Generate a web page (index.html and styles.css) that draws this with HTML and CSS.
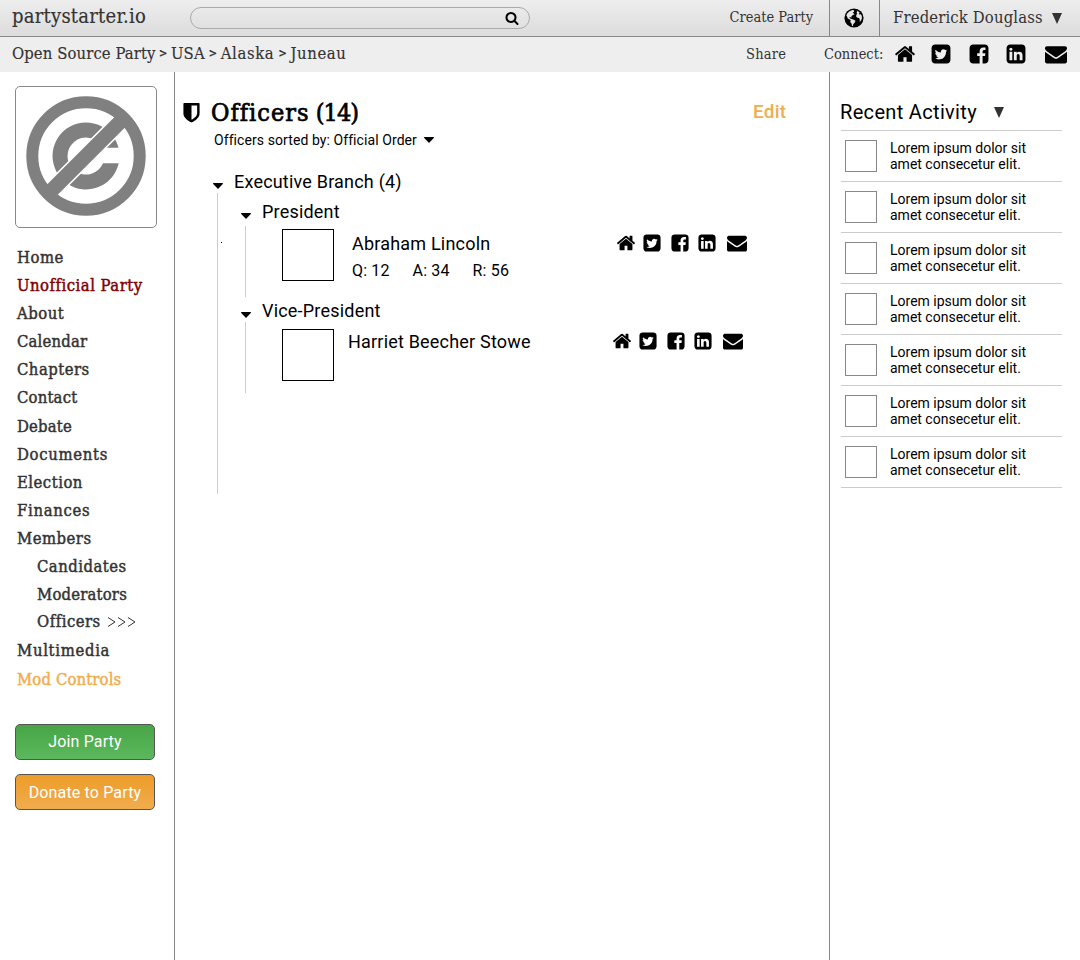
FILE: index.html
```html
<!DOCTYPE html>
<html lang="en">
<head>
<meta charset="utf-8">
<title>Officers - Open Source Party - partystarter.io</title>
<link rel="stylesheet" href="styles.css">
</head>
<body>
<svg class="sprite" aria-hidden="true">
  <symbol id="i-home" viewBox="0 0 1792 1792"><path d="M1472 992v480q0 26-19 45t-45 19h-384v-384h-256v384h-384q-26 0-45-19t-19-45v-480q0-1 .5-3t.5-3l575-474 575 474q1 2 1 6zm223-69l-62 74q-8 9-21 11h-3q-13 0-21-7l-692-577-692 577q-12 8-24 7-13-2-21-11l-62-74q-8-10-7-23.5t11-21.5l719-599q32-26 76-26t76 26l244 204v-195q0-14 9-23t23-9h192q14 0 23 9t9 23v408l219 182q10 8 11 21.5t-7 23.5z"/></symbol>
  <symbol id="i-twitter" viewBox="0 0 1792 1792"><path d="M1408 610q-56 25-121 34 68-40 93-117-65 38-134 51-61-66-153-66-87 0-148.5 61.5t-61.5 148.5q0 29 5 48-129-7-242-65t-192-155q-29 50-29 106 0 114 91 175-47-1-100-26v2q0 75 50 133.5t123 72.5q-29 8-51 8-13 0-39-4 21 63 74.5 104t121.5 42q-116 90-261 90-26 0-50-3 148 94 322 94 112 0 210-35.5t168-95 120.5-137 75-162 24.5-168.5q0-18-1-27 63-45 105-109zm256-194v960q0 119-84.5 203.5t-203.5 84.5h-960q-119 0-203.5-84.5t-84.5-203.5v-960q0-119 84.5-203.5t203.5-84.5h960q119 0 203.5 84.5t84.5 203.5z"/></symbol>
  <symbol id="i-facebook" viewBox="0 0 1792 1792"><path d="M1376 128q119 0 203.5 84.5t84.5 203.5v960q0 119-84.5 203.5t-203.5 84.5h-188v-595h199l30-232h-229v-148q0-56 23.5-84t91.5-28l122-1v-207q-63-9-178-9-136 0-217.5 80t-81.5 226v171h-200v232h200v595h-532q-119 0-203.5-84.5t-84.5-203.5v-960q0-119 84.5-203.5t203.5-84.5h960z"/></symbol>
  <symbol id="i-linkedin" viewBox="0 0 1792 1792"><path d="M365 1414h231v-694h-231v694zm246-908q-1-52-36-86t-93-34-94.5 34-36.5 86q0 51 35.5 85.5t92.5 34.5h1q59 0 95-34.5t36-85.5zm585 908h231v-398q0-154-73-233t-193-79q-136 0-209 117h2v-101h-231q3 66 0 694h231v-388q0-38 7-56 15-35 45-59.5t74-24.5q116 0 116 157v371zm468-998v960q0 119-84.5 203.5t-203.5 84.5h-960q-119 0-203.5-84.5t-84.5-203.5v-960q0-119 84.5-203.5t203.5-84.5h960q119 0 203.5 84.5t84.5 203.5z"/></symbol>
  <symbol id="i-mail" viewBox="0 0 1792 1792"><path d="M1792 710v794q0 66-47 113t-113 47h-1472q-66 0-113-47t-47-113v-794q44 49 101 87 362 246 497 345 57 42 92.5 65.5t94.5 48 110 24.5h2q51 0 110-24.5t94.5-48 92.5-65.5q170-123 498-345 57-39 100-87zm0-294q0 79-49 151t-122 123q-376 261-468 325-10 7-42.5 31t-54 38.5-52 32.5-57.5 27-50 9h-2q-23 0-50-9t-57.5-27-52-32.5-54-38.5-42.5-31q-91-64-262-182.5t-205-142.5q-62-42-117-115.5t-55-136.5q0-78 41.5-130t118.5-52h1472q65 0 112.5 47t47.5 113z"/></symbol>
  <symbol id="i-search" viewBox="0 0 1792 1792"><path d="M1216 832q0-185-131.5-316.5t-316.5-131.5-316.5 131.5-131.5 316.5 131.5 316.5 316.5 131.5 316.5-131.5 131.5-316.5zm512 832q0 52-38 90t-90 38q-54 0-90-38l-343-342q-179 124-399 124-143 0-273.5-55.5t-225-150-150-225-55.5-273.5 55.5-273.5 150-225 225-150 273.5-55.5 273.5 55.5 225 150 150 225 55.5 273.5q0 220-124 399l343 343q37 37 37 90z"/></symbol>
  <symbol id="i-shield" viewBox="256 128 1280 1664"><path d="M1344 960v-640h-448v1137q119-63 213-137 235-184 235-360zm192-768v768q0 86-33.5 170.5t-83 150-118 127.5-126.5 103-121 77.5-89.5 49.5-42.5 20q-12 6-26 6t-26-6q-16-7-42.5-20t-89.5-49.5-121-77.5-126.5-103-118-127.5-83-150-33.5-170.5v-768q0-26 19-45t45-19h1152q26 0 45 19t19 45z"/></symbol>
  <symbol id="i-caret" viewBox="0 0 10 6"><path d="M.6 0h8.800q.6 0 .6.6 0 .3-.2.500L5.500 5.500q-.5.5-1 0L.2 1.100Q0 .9 0 .6 0 0 .6 0z"/></symbol>
  <symbol id="i-triangle" viewBox="0 0 10 11"><path d="M0 0h10L5 11z"/></symbol>
</svg>

<header class="topbar">
  <a class="brand">partystarter.io</a>
  <div class="search"><svg class="search-icon"><use href="#i-search"/></svg></div>
  <a class="create">Create Party</a>
  <div class="globe">
    <svg viewBox="0 0 20 20"><circle cx="10" cy="10" r="9.600"/><path fill="#e6e6e6" d="M9 1.900 7.600 2.200 5.200 3.600 3.200 5.600 2.300 7.600 3.200 8.800 3.700 10.600 5.300 11.300 6.700 12.200 6.200 14 7.500 15.600 8 17.800 9 18.100 9.200 16.300 10.800 14.600 11.500 12.800 9.800 11.800 7.700 10.900 6.200 10.600 5.200 9.800 6.200 9 7.500 9.700 7.400 8.300 9 7.100 10.600 6.200 9.500 5.200 8.700 4.400 10.200 3.800 10 2.600zM12.600 2.200 13.300 3.700 12.300 5.100 13.400 5.600 12.300 7 12.200 8.800 13.500 9.800 15.200 9.900 15.700 11.800 15.800 14.100 17 12.500 17.900 10.400 17.800 7.900 16.700 6 16 6.600 14.700 6.200 15.700 4.600z"/></svg>
  </div>
  <a class="user">Frederick Douglass <svg class="triangle"><use href="#i-triangle"/></svg></a>
</header>

<div class="subbar">
  <nav class="crumbs"><a class="root">Open Source Party</a><span>&gt;</span><a>USA</a><span>&gt;</span><a class="place">Alaska</a><span>&gt;</span><a class="place">Juneau</a></nav>
  <a class="share">Share</a>
  <span class="connect">Connect:</span>
  <div class="socials socials-large">
    <svg><use href="#i-home"/></svg><svg><use href="#i-twitter"/></svg><svg><use href="#i-facebook"/></svg><svg><use href="#i-linkedin"/></svg><svg><use href="#i-mail"/></svg>
  </div>
</div>

<div class="columns">
  <aside class="sidebar">
    <div class="logo">
      <svg viewBox="-60 -60 120 120">
        <path fill="#808080" d="M32.500-8.300A33.500 33.500 0 1 0 32.700 7.300H17A18.500 18.500 0 1 1 16.500-8.300z"/>
        <path stroke="#fff" stroke-width="18" d="M-33 33 33-33"/>
        <path stroke="#808080" stroke-width="14.600" d="M-37 37 37-37"/>
        <circle r="53.700" fill="none" stroke="#808080" stroke-width="12"/>
      </svg>
    </div>
    <nav class="menu">
      <a>Home</a>
      <a class="unofficial">Unofficial Party</a>
      <a>About</a>
      <a class="tight">Calendar</a>
      <a>Chapters</a>
      <a class="tight">Contact</a>
      <a class="group tight">Debate</a>
      <a class="wide">Documents</a>
      <a>Election</a>
      <a class="wide">Finances</a>
      <a>Members</a>
      <div class="submenu">
        <a>Candidates</a>
        <a class="tight">Moderators</a>
        <a>Officers <svg class="chevrons" viewBox="0 0 29 10"><path d="M1 .5 8 5 1 9.500M11 .5 18 5 11 9.500M21 .5 28 5 21 9.500"/></svg></a>
      </div>
      <a class="group wide">Multimedia</a>
      <a class="mod group">Mod Controls</a>
    </nav>
    <a class="button join">Join Party</a>
    <a class="button donate">Donate to Party</a>
  </aside>

  <main class="content">
    <div class="heading">
      <svg class="shield"><use href="#i-shield"/></svg>
      <h1>Officers <span>(14)</span></h1>
      <a class="edit">Edit</a>
    </div>
    <div class="sort">Officers sorted by: Official Order <svg class="caret"><use href="#i-caret"/></svg></div>

    <section class="branch">
      <h2><svg class="caret"><use href="#i-caret"/></svg>Executive Branch (4)</h2>
      <div class="branch-body">
        <i class="dot"></i>
        <h3><svg class="caret"><use href="#i-caret"/></svg>President</h3>
        <div class="role">
          <div class="photo"></div>
          <div class="person">
            <div class="name">Abraham Lincoln</div>
            <div class="stats"><span>Q: 12</span><span>A: 34</span><span>R: 56</span></div>
          </div>
          <div class="socials">
            <svg><use href="#i-home"/></svg><svg><use href="#i-twitter"/></svg><svg><use href="#i-facebook"/></svg><svg><use href="#i-linkedin"/></svg><svg><use href="#i-mail"/></svg>
          </div>
        </div>
        <h3 class="second"><svg class="caret"><use href="#i-caret"/></svg>Vice-President</h3>
        <div class="role role-vice">
          <div class="photo"></div>
          <div class="person"><div class="name">Harriet Beecher Stowe</div></div>
          <div class="socials">
            <svg><use href="#i-home"/></svg><svg><use href="#i-twitter"/></svg><svg><use href="#i-facebook"/></svg><svg><use href="#i-linkedin"/></svg><svg><use href="#i-mail"/></svg>
          </div>
        </div>
      </div>
    </section>
  </main>

  <aside class="activity">
    <h2>Recent Activity <svg class="triangle"><use href="#i-triangle"/></svg></h2>
    <ul>
      <li><i></i><p>Lorem ipsum dolor sit<br>amet consecetur elit.</p></li>
      <li><i></i><p>Lorem ipsum dolor sit<br>amet consecetur elit.</p></li>
      <li><i></i><p>Lorem ipsum dolor sit<br>amet consecetur elit.</p></li>
      <li><i></i><p>Lorem ipsum dolor sit<br>amet consecetur elit.</p></li>
      <li><i></i><p>Lorem ipsum dolor sit<br>amet consecetur elit.</p></li>
      <li><i></i><p>Lorem ipsum dolor sit<br>amet consecetur elit.</p></li>
      <li><i></i><p>Lorem ipsum dolor sit<br>amet consecetur elit.</p></li>
    </ul>
  </aside>
</div>
</body>
</html>
```

FILE: styles.css
```css
* { box-sizing: border-box; }
body {
  margin: 0;
  height: 960px;
  overflow: hidden;
  background: #fff;
  color: #000;
  font-family: Roboto, sans-serif;
  white-space: nowrap;
}
h1, h2, h3, p, ul { margin: 0; padding: 0; font-weight: 400; }
svg { display: block; flex: none; }
.sprite { position: absolute; width: 0; height: 0; }

/* Header bars */
.topbar, .subbar, .menu, h1 { font-family: "Roboto Slab", "DejaVu Serif Condensed", "DejaVu Serif", serif; }
.topbar {
  display: flex;
  height: 37px;
  border-bottom: 1px solid #888;
  background: linear-gradient(#eee, #dcdcdc);
  color: #333;
  line-height: 34px;
}
.brand { width: 190px; padding-left: 12px; font-size: 20px; line-height: 32px; letter-spacing: .23px; -webkit-text-stroke: .15px; }
.search {
  display: flex;
  justify-content: flex-end;
  align-items: center;
  width: 340px;
  height: 22px;
  margin-top: 7px;
  padding-right: 10px;
  border: 1px solid #aaa;
  border-radius: 11px;
}
.search-icon { width: 14px; height: 14px; margin-top: -1px; fill: #000; }
.create { margin-left: auto; padding-right: 16px; font-size: 14.5px; }
.globe {
  display: flex;
  justify-content: center;
  align-items: center;
  width: 51px;
  padding-right: 1px;
  border: solid #888;
  border-width: 0 1px;
}
.globe svg { width: 20px; height: 20px; }
.user { display: flex; align-items: center; width: 200px; padding-left: 13px; font-size: 16.5px; letter-spacing: .15px; }
.triangle { width: 10px; height: 11px; fill: #333; }
.user .triangle { margin-left: 9px; }

.subbar { display: flex; align-items: center; height: 35px; background: #eee; color: #333; font-size: 14.5px; line-height: 33px; }
.crumbs { display: flex; width: 746px; padding: 0 0 2px 12px; font-size: 16.5px; letter-spacing: .1px; -webkit-text-stroke: .15px; }
.crumbs span { width: 16px; font-family: Roboto, sans-serif; font-size: 15px; text-align: center; }
.crumbs .root { width: 143px; }
.crumbs .place { letter-spacing: .65px; }
.share { width: 78px; letter-spacing: .2px; }
.connect { width: 70px; }

.socials { display: grid; grid-template-columns: 26px 28px 27px 30px 20px; align-items: center; fill: #000; }
.socials svg { width: 20px; height: 20px; }
.socials-large { grid-template-columns: 36.500px 38px 37px 39.500px 22px; margin: -1px 0 0 -.5px; }
.socials-large svg { width: 22px; height: 22px; }

/* Columns */
.columns { display: flex; height: 888px; }
.sidebar { width: 175px; padding: 14px 0 0 15px; border-right: 1px solid #888; }
.logo {
  display: flex;
  justify-content: center;
  align-items: center;
  width: 142px;
  height: 142px;
  padding-bottom: 2px;
  border: 1px solid #888;
  border-radius: 5px;
}
.logo svg { width: 120px; height: 120px; }

.menu { margin: 16px 0 30px 2px; color: #333; font-size: 16.5px; line-height: 28px; letter-spacing: .5px; -webkit-text-stroke: .45px; }
.menu a { display: flex; align-items: center; height: 28px; }
.menu .group { margin-top: 1px; }
.menu .tight { letter-spacing: .2px; }
.menu .wide { letter-spacing: .7px; }
.menu .unofficial { color: #800000; }
.menu .mod { color: #f0ad4e; letter-spacing: .15px; }
.submenu { padding-left: 20px; }
.submenu a + a { height: 27.500px; }
.chevrons { width: 29px; height: 10px; margin-left: 6px; fill: none; stroke: #333; }

.button {
  display: block;
  width: 140px;
  height: 36px;
  margin-bottom: 14px;
  border: 1px solid #555;
  border-radius: 5px;
  color: #fff;
  font-size: 16px;
  line-height: 34px;
  letter-spacing: .15px;
  text-align: center;
}
.join { background: linear-gradient(#47a447, #5cb85c); }
.donate { background: linear-gradient(#ed9c28, #f0ad4e); line-height: 36px; }

/* Officers list */
.content { flex: 1; padding-top: 26px; }
.heading { display: flex; align-items: center; height: 30px; padding-left: 8px; }
.shield { width: 17px; height: 21px; margin-top: 1px; }
h1 { width: 542px; margin-left: 11px; font-size: 25px; line-height: 30px; letter-spacing: 1px; word-spacing: -2px; -webkit-text-stroke: .7px; }
h1 span { letter-spacing: -.9px; }
.edit { color: #f0ad4e; font-size: 19px; font-weight: 500; line-height: 28px; letter-spacing: .2px; margin-top: -2px; }
.sort { display: flex; align-items: center; height: 20px; margin-top: 2px; padding-left: 39px; font-size: 14px; letter-spacing: .08px; }
.caret { width: 10px; height: 6px; }
.sort .caret { margin-left: 7px; }

.branch { margin-top: 22px; font-size: 18px; letter-spacing: .2px; }
.branch h2, .branch h3 { display: flex; align-items: center; height: 20px; font-size: 18px; line-height: 20px; }
.branch .caret { margin: 7px 11.500px 0 .5px; }
.branch h2 { padding-left: 37px; }
.branch h3 { padding-left: 22px; }
.branch-body { position: relative; height: 301px; margin: 1px 0 0 42px; padding-top: 9px; border-left: 1px solid #ccc; }
.dot { position: absolute; top: 49px; left: 3px; width: 1px; height: 1px; background: #000; }
.role { display: flex; height: 71px; margin: 4px 0 0 27px; padding: 3px 0 0 36px; border-left: 1px solid #ccc; }
.branch .second { margin-top: 4px; }
.role-vice { margin-top: 1px; padding-top: 7px; }
.photo { width: 52px; height: 52px; border: 1px solid #000; }
.person { width: 265px; padding: 4px 0 0 18px; line-height: 22px; }
.stats { display: flex; gap: 23px; padding-top: 5px; font-size: 16px; letter-spacing: .15px; }
.role .socials { align-self: flex-start; margin: 4px 0 0 17px; }
.role-vice .person { padding: 2px 0 0 14px; }
.role-vice .socials { margin: 2px 0 0 13px; }

/* Recent activity */
.activity { width: 251px; padding: 26px 18px 0 11px; border-left: 1px solid #888; }
.activity h2 { display: flex; align-items: center; height: 33px; padding-bottom: 5px; border-bottom: 1px solid #ccc; font-size: 20px; letter-spacing: .33px; text-indent: -1px; }
.activity .triangle { margin: 2px 0 0 17px; }
.activity ul { list-style: none; }
.activity li { display: flex; height: 51px; padding: 9px 0 0 4px; border-bottom: 1px solid #ccc; }
.activity i { width: 32px; height: 32px; margin-right: 13px; border: 1px solid #888; }
.activity p { font-size: 14px; line-height: 16px; }
```
